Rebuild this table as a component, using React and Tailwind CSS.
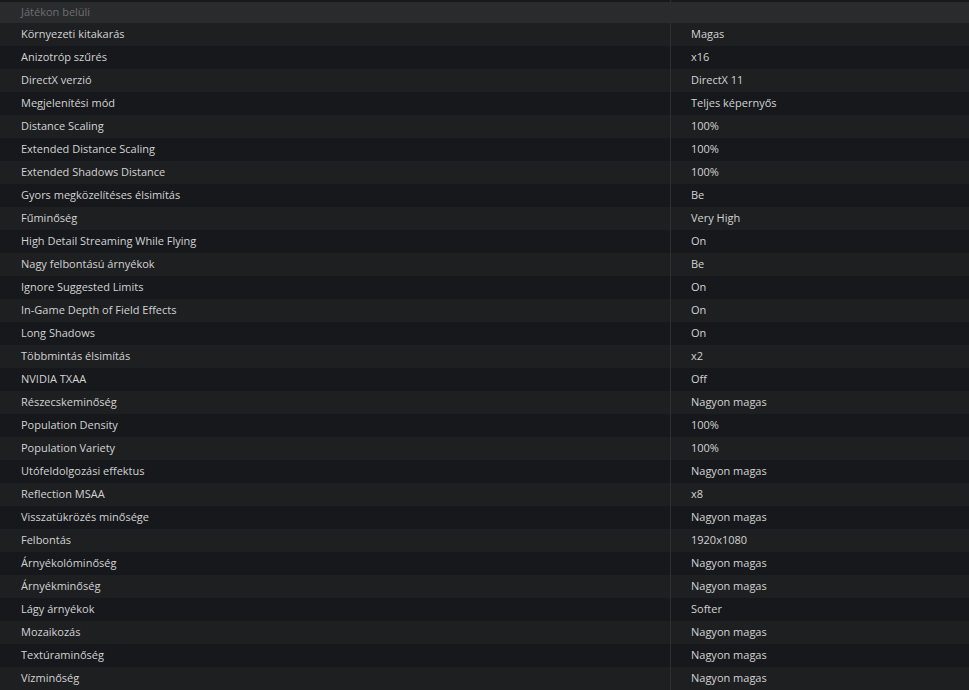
import React from "react";

const rows = [
  ["Környezeti kitakarás", "Magas"],
  ["Anizotróp szűrés", "x16"],
  ["DirectX verzió", "DirectX 11"],
  ["Megjelenítési mód", "Teljes képernyős"],
  ["Distance Scaling", "100%"],
  ["Extended Distance Scaling", "100%"],
  ["Extended Shadows Distance", "100%"],
  ["Gyors megközelítéses élsimítás", "Be"],
  ["Fűminőség", "Very High"],
  ["High Detail Streaming While Flying", "On"],
  ["Nagy felbontású árnyékok", "Be"],
  ["Ignore Suggested Limits", "On"],
  ["In-Game Depth of Field Effects", "On"],
  ["Long Shadows", "On"],
  ["Többmintás élsimítás", "x2"],
  ["NVIDIA TXAA", "Off"],
  ["Részecskeminőség", "Nagyon magas"],
  ["Population Density", "100%"],
  ["Population Variety", "100%"],
  ["Utófeldolgozási effektus", "Nagyon magas"],
  ["Reflection MSAA", "x8"],
  ["Visszatükrözés minősége", "Nagyon magas"],
  ["Felbontás", "1920x1080"],
  ["Árnyékolóminőség", "Nagyon magas"],
  ["Árnyékminőség", "Nagyon magas"],
  ["Lágy árnyékok", "Softer"],
  ["Mozaikozás", "Nagyon magas"],
  ["Textúraminőség", "Nagyon magas"],
  ["Vízminőség", "Nagyon magas"],
];

export default function App() {
  return (
    <div
      className="w-[969px] h-[690px] overflow-hidden bg-[#17181b] text-[11px] text-[#d2d3d4]"
      style={{ fontFamily: '"Open Sans", "Noto Sans", sans-serif' }}
    >
      <div className="flex h-[2px] bg-[#18191b]">
        <div className="w-[670px]" />
        <div className="w-px bg-[#2e2f31]" />
      </div>
      <div className="h-[21px] bg-[#2a2b2d] flex items-center pl-[21px] text-[#6e6f71]">
        Játékon belüli
      </div>
      {rows.map(([k, v], i) => (
        <div
          key={i}
          className={
            "flex h-[23px] items-center " +
            (i % 2 === 0 ? "bg-[#1e1f21]" : "bg-[#16181b]")
          }
        >
          <div className="w-[670px] pl-[21px] truncate">{k}</div>
          <div className="w-px h-full bg-[#2e2f31]" />
          <div className="flex-1 pl-[20px]">{v}</div>
        </div>
      ))}
    </div>
  );
}
